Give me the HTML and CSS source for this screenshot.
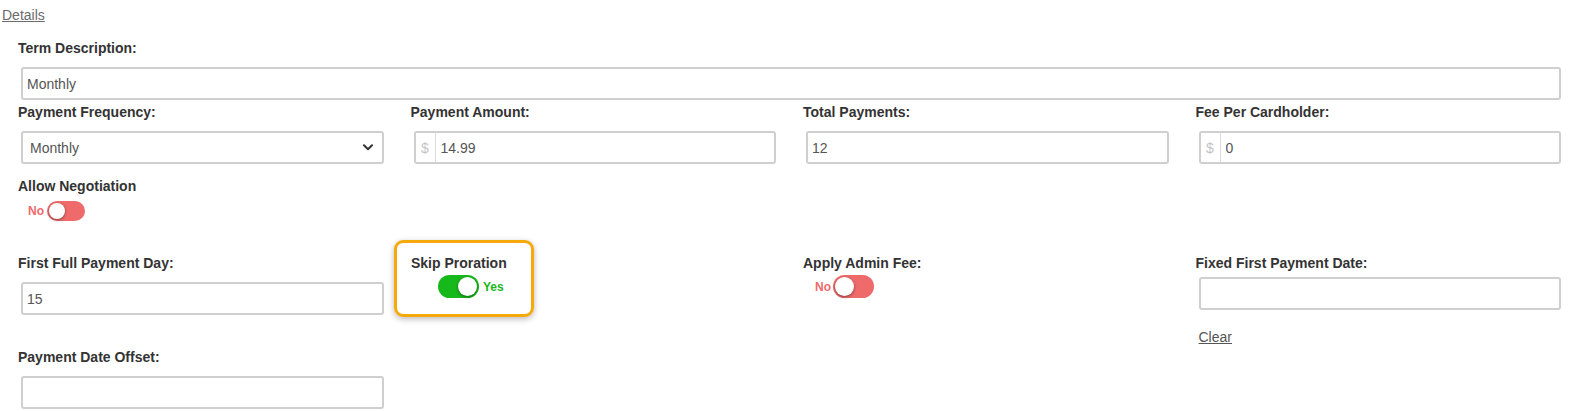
FILE: index.html
```html
<!DOCTYPE html>
<html lang="en">
<head>
<meta charset="utf-8">
<title>Term Details</title>
<link rel="stylesheet" href="styles.css">
</head>
<body>
<a class="details" href="#">Details</a>

<div class="row r1">
  <div class="col">
    <label class="lbl">Term Description:</label>
    <input class="field" type="text" value="Monthly">
  </div>
</div>

<div class="row grid4 r2">
  <div class="col">
    <label class="lbl">Payment Frequency:</label>
    <div class="field select">
      <span>Monthly</span>
      <svg class="chev" width="10" height="7" viewBox="0 0 10 7"><path d="M1 1.2 L5 5.2 L9 1.2" fill="none" stroke="#333" stroke-width="2" stroke-linecap="round" stroke-linejoin="round"/></svg>
    </div>
  </div>
  <div class="col">
    <label class="lbl">Payment Amount:</label>
    <div class="field group">
      <span class="addon">$</span>
      <input class="ginput" type="text" value="14.99">
    </div>
  </div>
  <div class="col">
    <label class="lbl">Total Payments:</label>
    <input class="field" type="text" value="12">
  </div>
  <div class="col">
    <label class="lbl">Fee Per Cardholder:</label>
    <div class="field group">
      <span class="addon">$</span>
      <input class="ginput" type="text" value="0">
    </div>
  </div>
</div>

<div class="row grid4 r3">
  <div class="col">
    <label class="lbl lbl-tog">Allow Negotiation</label>
    <div class="togwrap small allow">
      <span class="state no">No</span>
      <span class="toggle off"><span class="knob"></span></span>
    </div>
  </div>
</div>

<div class="row grid4 r4">
  <div class="col">
    <label class="lbl">First Full Payment Day:</label>
    <input class="field" type="text" value="15">
  </div>
  <div class="col">
    <div class="highlight">
      <label class="lbl lbl-tog2">Skip Proration</label>
      <div class="togwrap skip">
        <span class="toggle on"><span class="knob"></span></span>
        <span class="state yes">Yes</span>
      </div>
    </div>
  </div>
  <div class="col">
    <label class="lbl lbl-tog2">Apply Admin Fee:</label>
    <div class="togwrap admin">
      <span class="state no">No</span>
      <span class="toggle off"><span class="knob"></span></span>
    </div>
  </div>
  <div class="col">
    <label class="lbl lbl-date">Fixed First Payment Date:</label>
    <input class="field" type="text" value="">
    <a class="clear" href="#">Clear</a>
  </div>
</div>

<div class="row grid4 r5">
  <div class="col">
    <label class="lbl">Payment Date Offset:</label>
    <input class="field" type="text" value="">
  </div>
</div>
</body>
</html>
```

FILE: styles.css
```css
html, body {
  margin: 0;
  padding: 0;
  background: #fff;
}
body {
  font-family: "Liberation Sans", Arial, sans-serif;
  font-size: 14px;
  color: #333;
  width: 1579px;
  height: 411px;
  overflow: hidden;
}
.details {
  display: block;
  width: max-content;
  margin-left: 2px;
  padding-top: 6px;
  line-height: 18px;
  font-size: 14px;
  color: #6b6b6b;
  text-decoration: underline;
}
.row {
  margin: 0 3px 0 6px;
}
.grid4 {
  display: grid;
  grid-template-columns: repeat(4, 1fr);
}
.col {
  padding: 0 15px;
  min-width: 0;
}
.r1 { margin-top: 15px; }
.r2 { margin-top: 3px; }
.r3 { margin-top: 13px; }
.r4 { margin-top: 32px; }
.r5 { margin-top: 2px; }

.lbl {
  display: block;
  margin: 0 0 10px -3px;
  line-height: 18px;
  font-weight: bold;
  font-size: 14px;
  color: #333;
  white-space: nowrap;
}
.lbl-tog { margin-bottom: 5px; }
.lbl-tog2 { margin-bottom: 2px; }
.lbl-date { margin-bottom: 5px; }

.field {
  display: block;
  box-sizing: border-box;
  width: 100%;
  height: 33px;
  margin: 0;
  padding: 0 4px;
  border: 2px solid #cfcfcf;
  border-radius: 3px;
  background: #fff;
  font-family: inherit;
  font-size: 14px;
  color: #555;
  outline: none;
}
.select {
  display: flex;
  align-items: center;
  justify-content: space-between;
  padding: 0 9px 0 7px;
}
.chev { display: block; }
.group {
  display: flex;
  align-items: stretch;
  padding: 0;
}
.addon {
  display: flex;
  align-items: center;
  justify-content: center;
  width: 19px;
  border-right: 1px solid #dcdcdc;
  color: #c4c4c4;
  font-size: 14px;
}
.ginput {
  flex: 1;
  min-width: 0;
  border: 0;
  margin: 0;
  padding: 0 5px;
  font-family: inherit;
  font-size: 14px;
  color: #555;
  background: transparent;
  outline: none;
}

.togwrap {
  display: flex;
  align-items: center;
  height: 25px;
}
.togwrap.small { height: 22px; }
.allow { margin-left: 7px; gap: 3px; }
.skip { margin-left: 24px; gap: 4px; }
.admin { margin-left: 9px; gap: 2px; }

.state {
  font-size: 12px;
  font-weight: bold;
  line-height: 14px;
}
.state.no { color: #ef6a6a; }
.state.yes { color: #19b81b; }

.toggle {
  position: relative;
  display: block;
  width: 41px;
  height: 23px;
  border-radius: 12px;
  background: #ef6a6a;
}
.small .toggle {
  width: 38px;
  height: 20px;
  border-radius: 10px;
}
.toggle.on { background: #17b81a; }
.knob {
  position: absolute;
  top: 2px;
  left: 2px;
  width: 19px;
  height: 19px;
  border-radius: 50%;
  background: #fff;
  box-shadow: 0 1px 3px rgba(0, 0, 0, 0.45);
}
.small .knob {
  width: 16px;
  height: 16px;
}
.toggle.on .knob {
  left: auto;
  right: 2px;
}

.highlight {
  box-sizing: border-box;
  width: 140px;
  height: 77px;
  margin: -14px 0 0 -19.5px;
  padding: 11px 0 0 17px;
  border: 3px solid #f6a90b;
  border-radius: 9px;
  box-shadow: 0 2px 6px rgba(0, 0, 0, 0.28);
}

.clear {
  display: block;
  width: max-content;
  margin-top: 18px;
  line-height: 18px;
  font-size: 14px;
  color: #555;
  text-decoration: underline;
}
```
